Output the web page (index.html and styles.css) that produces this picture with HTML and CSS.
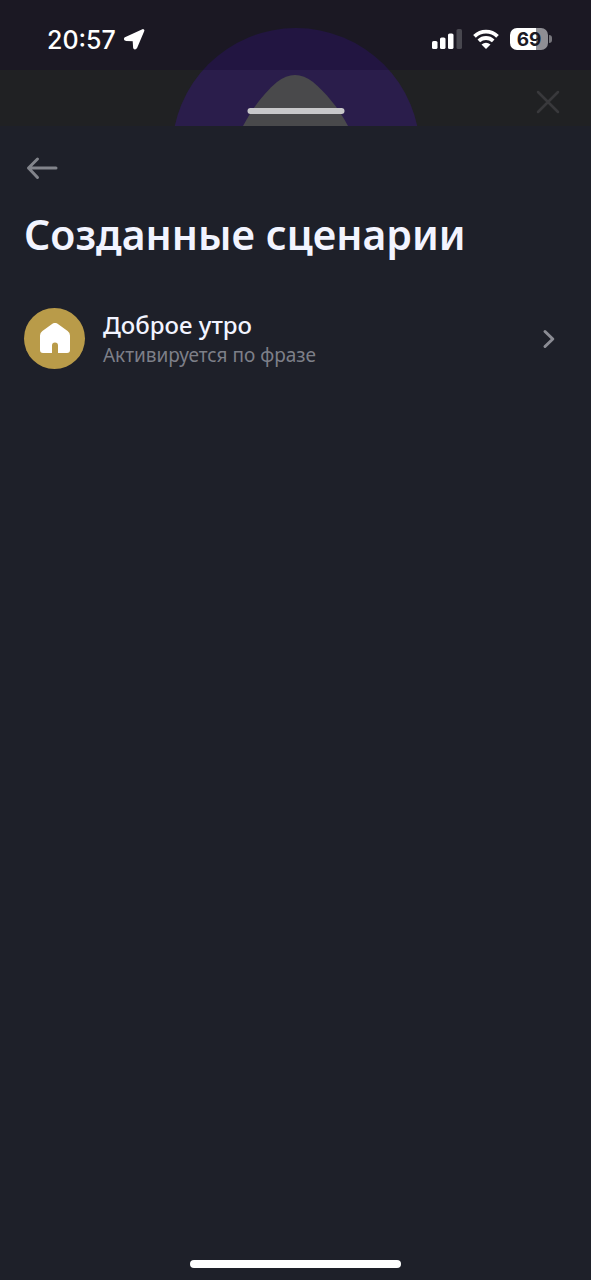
FILE: index.html
```html
<!DOCTYPE html>
<html lang="ru">
<head>
<meta charset="utf-8">
<meta name="viewport" content="width=device-width, initial-scale=1">
<title>Созданные сценарии</title>
<link rel="stylesheet" href="styles.css">
</head>
<body>
<div class="screen">
  <div class="backdrop">
    <svg class="backdrop-art" width="248" height="98" viewBox="0 0 248 98" aria-hidden="true">
      <circle cx="124" cy="124" r="124" fill="#2a1d4b"/>
      <path d="M71 98C81 79 93 64 105 54Q123 40 141 54C153 64 166 79 176 98Z" fill="#49494b"/>
    </svg>
    <header class="status">
      <div class="status-left">
        <time class="clock">20:57</time>
        <svg width="22" height="22" viewBox="0 0 22 22" aria-label="Геопозиция"><path d="M20 2.500 2.500 10.500Q2 11.300 3 11.500L11 11.800 11.500 19.500Q12 20.500 12.800 19.500Z" fill="#fff" stroke="#fff" stroke-width="2.800" stroke-linejoin="round"/></svg>
      </div>
      <div class="status-right">
        <svg width="30" height="20" viewBox="0 0 30 20" aria-label="Сигнал"><g fill="#fff"><rect x="0" y="12" width="5.500" height="8" rx="1.600"/><rect x="8" y="8.500" width="5.500" height="11.500" rx="1.600"/><rect x="16" y="4.500" width="5.500" height="15.500" rx="1.600"/></g><rect x="24.500" y="0" width="5.500" height="20" rx="1.600" fill="#48474f"/></svg>
        <svg width="26" height="20" viewBox="0 0 26 20" aria-label="Wi-Fi"><g fill="none" stroke="#fff" stroke-width="3.800"><path d="M1.500 7.300C8 1 18 1 24.500 7.300"/><path d="M5.800 11.900C10 8 16 8 20.200 11.900"/></g><path d="M13 20 8.500 15.600Q13 12 17.500 15.600Z" fill="#fff"/></svg>
        <div class="battery"><span class="battery-level">69</span></div>
      </div>
    </header>
    <div class="backdrop-row">
      <button class="close" type="button" aria-label="Закрыть"><svg width="24" height="24" viewBox="0 0 24 24"><path d="M2 2 22 22M22 2 2 22" fill="none" stroke="#39393c" stroke-width="2.500" stroke-linecap="round"/></svg></button>
    </div>
    <div class="grabber"></div>
  </div>
  <main class="sheet">
    <button class="back" type="button" aria-label="Назад"><svg width="34" height="24" viewBox="0 0 34 24"><path d="M13.500 3 4.500 12 13.500 21.500M4.500 12H32" fill="none" stroke="#82848b" stroke-width="3" stroke-linecap="round" stroke-linejoin="round"/></svg></button>
    <h1 class="title">Созданные сценарии</h1>
    <a class="scenario" href="#">
      <span class="scenario-icon"><svg width="32" height="32" viewBox="0 0 32 32" aria-hidden="true"><path d="M13.400 .800Q16-1 18.600 .800L28.600 8Q31 9.800 31 12.500V27Q31 30 28 30H19V22.500Q19 19.500 16 19.500T13 22.500V30H4Q1 30 1 27V12.500Q1 9.800 3.400 8Z" fill="#fff"/></svg></span>
      <span class="scenario-text">
        <span class="scenario-name">Доброе утро</span>
        <span class="scenario-note">Активируется по фразе</span>
      </span>
      <svg width="14" height="20" viewBox="0 0 14 20" aria-hidden="true"><path d="M3 2.500 10.800 10 3 17.500" fill="none" stroke="#8b8c94" stroke-width="3" stroke-linecap="round" stroke-linejoin="round"/></svg>
    </a>
  </main>
  <div class="home-indicator"></div>
</div>
</body>
</html>
```
FILE: styles.css
```css
* { box-sizing: border-box; }

body {
  margin: 0;
  background: #1e2029;
  font-family: "Noto Sans", "Open Sans", sans-serif;
  color: #f2f4ff;
}

button {
  display: flex;
  padding: 0;
  border: 0;
  background: none;
}

.screen {
  display: flex;
  flex-direction: column;
  min-height: 100vh;
}

.backdrop {
  position: relative;
  height: 126px;
  background: #202123;
}

.backdrop-art {
  position: absolute;
  left: 50%;
  bottom: 0;
  transform: translateX(-50%);
}

.status {
  position: relative;
  display: flex;
  align-items: center;
  justify-content: space-between;
  height: 70px;
  padding: 8px 43px 0 47px;
  background: rgba(12, 1, 35, 0.25);
}

.status-left,
.status-right {
  display: flex;
  align-items: center;
}

.status-left { gap: 7px; }
.status-right { gap: 11px; }

.clock {
  padding-top: 2px;
  font: 500 25px/32px Inter, sans-serif;
  color: #fff;
}

.battery {
  position: relative;
  width: 38px;
  height: 22px;
  border-radius: 7px;
  background: linear-gradient(to right, #fff 69%, #8f8e94 69%);
}

.battery::after {
  content: "";
  position: absolute;
  left: 39px;
  top: 7px;
  width: 3px;
  height: 8px;
  border-radius: 0 3px 3px 0;
  background: #77767c;
}

.battery-level {
  display: block;
  font: 700 19px/23px Inter, sans-serif;
  text-align: center;
  color: #1b1924;
}

.backdrop-row {
  display: flex;
  justify-content: flex-end;
  padding: 20px 31px 0;
}

.grabber {
  position: absolute;
  left: 50%;
  bottom: 12px;
  width: 97px;
  height: 6px;
  border-radius: 3px;
  background: #c8c8ca;
  transform: translateX(-50%);
}

.sheet {
  flex: 1;
  padding: 30px 24px 0;
}

.back { margin-bottom: 24px; }

.title {
  margin: 0 0 44px;
  font-size: 41px;
  font-weight: 600;
  line-height: 60px;
}

.scenario {
  display: flex;
  align-items: center;
  gap: 18px;
  padding-right: 11px;
  color: inherit;
  text-decoration: none;
}

.scenario-icon {
  display: flex;
  align-items: center;
  justify-content: center;
  width: 61px;
  height: 61px;
  border-radius: 50%;
  background: #b99b49;
}

.scenario-text {
  display: flex;
  flex: 1;
  flex-direction: column;
}

.scenario-name {
  font-size: 24px;
  font-weight: 500;
  line-height: 32px;
}

.scenario-note {
  font-size: 19px;
  line-height: 28px;
  color: #7d7f88;
}

.home-indicator {
  align-self: center;
  width: 211px;
  height: 8px;
  margin-bottom: 12px;
  border-radius: 4px;
  background: #fff;
}
```
